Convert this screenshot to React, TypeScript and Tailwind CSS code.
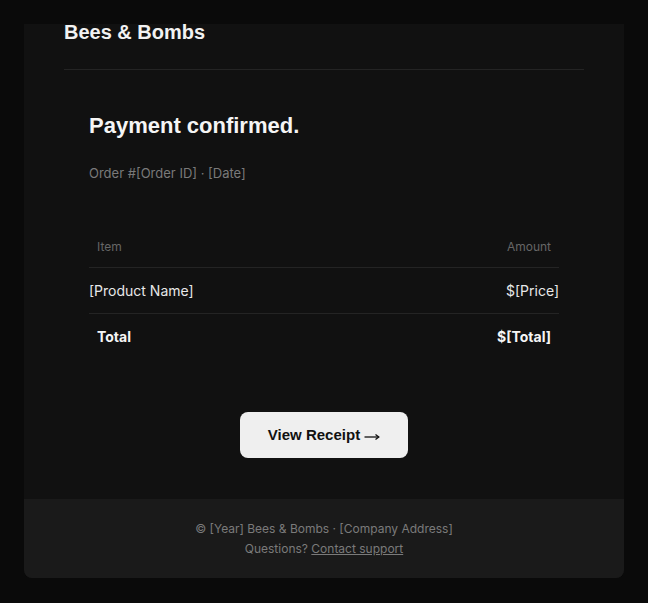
import React from 'react';

const sans = "font-['Inter','Noto_Sans',sans-serif]";
const arial = "font-['Liberation_Sans','Arial',sans-serif]";

function Arrow() {
  return (
    <svg width="16" height="10" viewBox="0 0 16 10" fill="none" className="mt-[3px]">
      <path d="M0.5 5H14.5" stroke="#111111" strokeWidth="1.3" />
      <path d="M11.5 2.5L14.8 5L11.5 7.5" stroke="#111111" strokeWidth="1.3" />
    </svg>
  );
}

export default function App() {
  return (
    <div className="min-h-[603px] w-full bg-[#0a0a0a] pt-6">
      <div className="mx-auto w-[600px] rounded-b-lg bg-[#111111]">
        {/* Header */}
        <div className="px-10">
          <div className="border-b border-[#242424] pb-[29px]">
            <h1 className={`${arial} text-[20px] font-bold leading-4 text-[#f2f2f2]`}>Bees &amp; Bombs</h1>
          </div>
        </div>

        {/* Body */}
        <div className="px-[65px] pt-[43px] pb-[41px]">
          <h2 className={`${arial} text-[22px] font-bold leading-[26px] text-[#f5f5f5]`}>Payment confirmed.</h2>
          <p className={`${sans} mt-6 text-[13px] leading-5 text-[#7a7a7a]`}>Order #[Order ID] · [Date]</p>

          <div className={`${sans} mt-11`}>
            <div className="flex h-[41px] items-center justify-between border-b border-[#242424] px-2 text-[12px] text-[#666666]">
              <span>Item</span>
              <span>Amount</span>
            </div>
            <div className="flex h-[46px] items-center justify-between border-b border-[#242424] text-[14px] text-[#e8e8e8]">
              <span>[Product Name]</span>
              <span>$[Price]</span>
            </div>
            <div className="flex h-[45px] items-center justify-between px-2 text-[14px] font-bold text-[#f5f5f5]">
              <span>Total</span>
              <span>$[Total]</span>
            </div>
          </div>

          <div className="mt-[53px] flex justify-center">
            <a
              href="#"
              className={`${arial} flex h-[46px] w-[168px] items-center justify-center gap-1 rounded-lg bg-[#efefef] text-[15px] font-bold text-[#111111]`}
            >
              View Receipt
              <Arrow />
            </a>
          </div>
        </div>

        {/* Footer */}
        <div className={`${sans} rounded-b-lg bg-[#1a1a1a] pt-5 pb-[19px] text-center text-[12px] leading-5 text-[#7a7a7a]`}>
          <p>© [Year] Bees &amp; Bombs · [Company Address]</p>
          <p>
            Questions? <a href="#" className="underline">Contact support</a>
          </p>
        </div>
      </div>
    </div>
  );
}
